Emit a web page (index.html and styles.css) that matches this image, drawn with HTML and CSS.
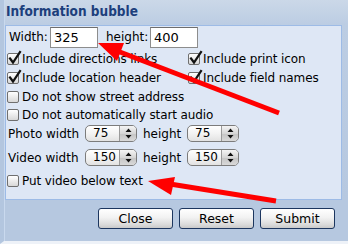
FILE: index.html
```html
<!DOCTYPE html>
<html>
<head>
<meta charset="utf-8">
<link rel="stylesheet" href="styles.css">
</head>
<body>
<div class="win">
  <div class="title">Information bubble</div>
  <div class="panel">
    <div class="dims">
      <span class="lbl">Width:</span>
      <span class="field">325</span>
      <span class="lbl hl">height:</span>
      <span class="field">400</span>
    </div>
    <div class="checks">
      <div class="chk"><span class="box"><svg width="16" height="16" viewBox="0 0 16 16"><path d="M3 7.5 L6 11.5 L13 1" class="tick"/></svg></span>Include directions links</div>
      <div class="chk"><span class="box"><svg width="16" height="16" viewBox="0 0 16 16"><path d="M3 7.5 L6 11.5 L13 1" class="tick"/></svg></span>Include print icon</div>
      <div class="chk"><span class="box"><svg width="16" height="16" viewBox="0 0 16 16"><path d="M3 7.5 L6 11.5 L13 1" class="tick"/></svg></span>Include location header</div>
      <div class="chk"><span class="box"><svg width="16" height="16" viewBox="0 0 16 16"><path d="M3 7.5 L6 11.5 L13 1" class="tick"/></svg></span>Include field names</div>
    </div>
    <div class="chk wide r3"><span class="box"></span>Do not show street address</div>
    <div class="chk wide r4"><span class="box"></span>Do not automatically start audio</div>
    <div class="selrow photo">
      <span class="slbl">Photo width</span>
      <span class="sel"><span class="sval">75</span><span class="sarr"><svg width="7" height="11" viewBox="0 0 7 11"><path d="M3.5 0.5 L6.5 4 L0.5 4 Z M0.5 7 L6.5 7 L3.5 10.5 Z" class="tri"/></svg></span></span>
      <span class="slbl h">height</span>
      <span class="sel"><span class="sval">75</span><span class="sarr"><svg width="7" height="11" viewBox="0 0 7 11"><path d="M3.5 0.5 L6.5 4 L0.5 4 Z M0.5 7 L6.5 7 L3.5 10.5 Z" class="tri"/></svg></span></span>
    </div>
    <div class="selrow video">
      <span class="slbl">Video width</span>
      <span class="sel"><span class="sval">150</span><span class="sarr"><svg width="7" height="11" viewBox="0 0 7 11"><path d="M3.5 0.5 L6.5 4 L0.5 4 Z M0.5 7 L6.5 7 L3.5 10.5 Z" class="tri"/></svg></span></span>
      <span class="slbl h">height</span>
      <span class="sel"><span class="sval">150</span><span class="sarr"><svg width="7" height="11" viewBox="0 0 7 11"><path d="M3.5 0.5 L6.5 4 L0.5 4 Z M0.5 7 L6.5 7 L3.5 10.5 Z" class="tri"/></svg></span></span>
    </div>
    <div class="chk wide last"><span class="box"></span>Put video below text</div>
  </div>
  <div class="buttons">
    <span class="btn">Close</span>
    <span class="btn">Reset</span>
    <span class="btn">Submit</span>
  </div>
  <svg class="arrows" width="348" height="244" viewBox="0 0 348 244">
    <line x1="116" y1="50.5" x2="279" y2="113" class="ashaft"/>
    <polygon points="98,43 117,61 124,43" class="ahead"/>
    <line x1="170" y1="184" x2="276" y2="201" class="ashaft"/>
    <polygon points="148,181 171,195 175,177" class="ahead"/>
  </svg>
</div>
</body>
</html>
```

FILE: styles.css
```css
html, body {
  margin: 0;
  padding: 0;
}
body {
  width: 348px;
  height: 244px;
  overflow: hidden;
  background: #b6c8e0;
  font-family: "DejaVu Sans", Verdana, sans-serif;
  font-size: 12px;
  color: #000;
}
.win {
  position: relative;
  width: 348px;
  height: 244px;
  box-sizing: border-box;
  border-left: 4px solid #b3c6df;
  border-bottom: 3px solid #eef2f8;
  background: linear-gradient(#cbd8e8 0px, #bccde3 24px, #b6c8e0 200px);
}
.win::before {
  content: "";
  position: absolute;
  left: 0;
  top: 0;
  bottom: 0;
  width: 1px;
  background: #c9d9ee;
}
.title {
  height: 25px;
  box-sizing: border-box;
  padding: 3px 0 0 2px;
  font-family: "DejaVu Sans Condensed", "DejaVu Sans", sans-serif;
  font-weight: bold;
  font-size: 13.5px;
  color: #1d3f7c;
}
.panel {
  margin: 0 6px 0 1px;
  height: 175px;
  box-sizing: border-box;
  border: 1px solid #9dbbe6;
  background: #dee7f5;
  padding: 1px 0 0 1px;
}
.dims {
  display: flex;
  height: 22px;
  align-items: flex-start;
}
.lbl {
  line-height: 21px;
  padding-left: 2px;
  width: 41px;
}
.lbl.hl {
  width: 44px;
  padding-left: 8px;
}
.field {
  width: 48px;
  height: 21px;
  box-sizing: border-box;
  border: 1px solid #8d8d8d;
  border-top-color: #6e6e6e;
  background: #fff;
  font-size: 13px;
  line-height: 19px;
  padding-left: 3px;
}
.checks {
  display: grid;
  grid-template-columns: 181px auto;
  grid-auto-rows: 19px;
}
.chk {
  display: flex;
  align-items: center;
  height: 19px;
  letter-spacing: -0.1px;
}
.chk.r4 {
  height: 18px;
}
.box {
  position: relative;
  width: 12px;
  height: 12px;
  box-sizing: border-box;
  border: 1px solid #6f6f6f;
  border-radius: 2px;
  background: linear-gradient(#ffffff, #d8d8d8);
  margin-right: 3px;
  flex: none;
}
.box svg {
  position: absolute;
  left: -1px;
  top: -3px;
  overflow: visible;
}
.tick {
  fill: none;
  stroke: #111;
  stroke-width: 2.2;
  stroke-linecap: square;
}
.selrow {
  display: flex;
  align-items: center;
  height: 17px;
  margin-top: 1px;
}
.selrow.video {
  margin-top: 7px;
}
.slbl {
  width: 77px;
  padding-left: 1px;
}
.slbl.h {
  width: 44px;
  padding-left: 6px;
}
.sel {
  display: flex;
  width: 52px;
  height: 17px;
  box-sizing: border-box;
  border: 1px solid #7c7c7c;
  border-radius: 5px;
  background: linear-gradient(#ffffff, #f3f3f3 50%, #e2e2e2);
  overflow: hidden;
}
.sval {
  flex: 1;
  line-height: 15px;
  padding-left: 7px;
}
.sarr {
  width: 16px;
  border-left: 1px solid #9a9a9a;
  background: linear-gradient(#f4f4f4, #d6d6d6 50%, #c4c4c4 51%, #d9d9d9);
  display: flex;
  align-items: center;
  justify-content: center;
}
.tri {
  fill: #111;
}
.chk.last {
  margin-top: 6px;
  height: 18px;
}
.buttons {
  display: flex;
  justify-content: flex-end;
  gap: 6px;
  padding: 8px 13px 0 0;
}
.btn {
  width: 75px;
  height: 21px;
  box-sizing: border-box;
  border: 1px solid #1c365f;
  border-radius: 3px;
  background: linear-gradient(#ffffff, #f2f2f2 45%, #dcdcdc 80%, #c9c9c9);
  text-align: center;
  line-height: 19px;
  font-size: 12.5px;
}
.arrows {
  position: absolute;
  left: -4px;
  top: 0;
  pointer-events: none;
}
.ashaft {
  stroke: #f00;
  stroke-width: 5;
}
.ahead {
  fill: #f00;
}
```
